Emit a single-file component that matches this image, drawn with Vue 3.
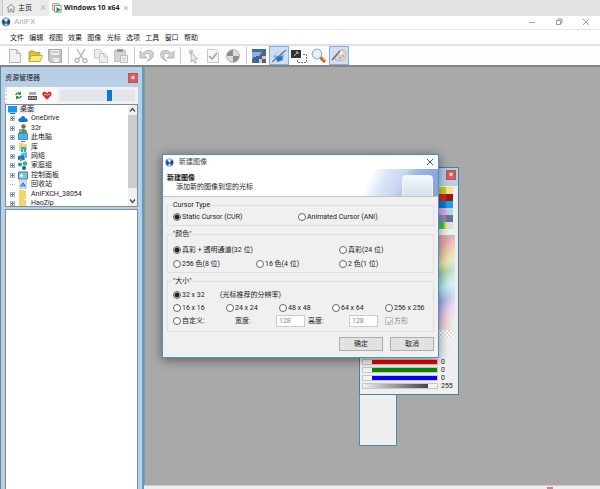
<script setup>
import { ref } from 'vue'

const menus = ['文件', '编辑', '视图', '效果', '图像', '光标', '选项', '工具', '窗口', '帮助']

const tools = [
  { id: 'new', label: '新建' }, { id: 'open', label: '打开' }, { id: 'save', label: '保存' }, null,
  { id: 'cut', label: '剪切' }, { id: 'copy', label: '复制' }, { id: 'paste', label: '粘贴' }, null,
  { id: 'undo', label: '撤消' }, { id: 'redo', label: '重做' }, null,
  { id: 'pointer', label: '热点' }, { id: 'check', label: '测试' }, { id: 'contrast', label: '对比度' }, null,
  { id: 'grid', label: '网格' }, { id: 'blend', label: '平滑', on: true }, { id: 'select', label: '选择' },
  { id: 'zoom', label: '缩放' }, { id: 'brush', label: '画笔', on: true },
]

const nodes = [
  { name: 'OneDrive', icon: 'cloud' }, { name: '32r', icon: 'user' }, { name: '此电脑', icon: 'pc' },
  { name: '库', icon: 'library' }, { name: '网络', icon: 'network' }, { name: '家庭组', icon: 'home' },
  { name: '控制面板', icon: 'panel' }, { name: '回收站', icon: 'bin', leaf: true },
  { name: 'AniFXCH_38054', icon: 'folder' }, { name: 'HaoZip', icon: 'folder' },
]

const swatches = [
  '#bdd42c', '#f8e488', '#d92820', '#a01810', '#0878d8', '#18a0f0', '#dfaade', '#c3cdec', '#8d8cb8', '#60799b',
  'linear-gradient(90deg, #4fc050 70%, #c8e020 70%)', '#dde2dc',
]
const channels = [
  { name: '红', color: '#ee0000', value: 0 },
  { name: '绿', color: '#078607', value: 0 },
  { name: '蓝', color: '#0404f4', value: 0 },
]

const kind = ref('cur')
const depth = ref('32')
const size = ref('32')
const width = ref('128')
const height = ref('128')
const volume = ref(67)
const square = ref(true)
</script>

<template>
  <div class="app">
    <header>
      <nav class="tabs">
        <a class="tab home" href="#">
          <svg width="10" height="10" viewBox="0 0 10 10"><path d="M1 5 5 1.3 9 5M2.2 4.5V9h2V6.2h1.7V9h2V4.5" fill="none" stroke="#888" stroke-width=".9" /></svg>
          <span>主页</span><i class="x">×</i>
        </a>
        <a class="tab current" href="#">
          <svg width="10" height="10" viewBox="0 0 10 10"><path d="M2.5 7H.8V.8h6.4V2M2.5 2.5h6.7v6.7H2.5z" fill="none" stroke="#888" stroke-width=".9" /><path d="M4.5 4 9 6.8 4.5 9.6z" fill="#16a02c" /></svg>
          <span>Windows 10 x64</span><i class="x">×</i>
        </a>
      </nav>
      <div class="titlebar">
        <svg class="logo" width="10" height="10" viewBox="0 0 10 10"><circle cx="5" cy="5" r="4.4" fill="#4775b5" /><path d="M1 3.2 4 5 3 7zM9 2.5 6 5l2 2z" fill="#162c62" /><path d="M2.5 1.500h5L5 5.300zM3.300 8.500l1.700-2 2 2z" fill="#e3effb" /></svg>
        <span class="appname">AniFX</span>
        <button class="wbtn" aria-label="最小化"><svg width="8" height="8" viewBox="0 0 8 8"><path d="M1 4.500h6" stroke="#aaa" /></svg></button>
        <button class="wbtn" aria-label="还原"><svg width="8" height="8" viewBox="0 0 8 8"><path d="M1.500 2.500h4v4h-4zM3 2.500V1h4v4H5.500" fill="none" stroke="#999" /></svg></button>
        <button class="wbtn" aria-label="关闭"><svg width="8" height="8" viewBox="0 0 8 8"><path d="m1 1 6 6M7 1 1 7" stroke="#999" stroke-width=".9" /></svg></button>
      </div>
      <nav class="menubar"><div class="menus"><a v-for="m in menus" :key="m" href="#">{{ m }}</a></div></nav>
      <div class="toolbar">
        <template v-for="(t, i) in tools" :key="i">
          <span v-if="!t" class="sep"></span>
          <button v-else class="tool" :class="{ on: t.on }" :aria-label="t.label">
            <svg width="16" height="16" viewBox="0 0 16 16">
              <g v-if="t.id === 'new'" fill="#f1f1f1" stroke="#b8b8b8"><path d="M2.500 1.500h7l4 4v9h-11z" /><path d="M9.500 1.500v4h4" fill="#ddd" /></g>
              <g v-else-if="t.id === 'open'"><path d="M2 13V4l1-1h4l1 1.500h5V7" fill="#d9c33a" stroke="#a39128" stroke-width=".7" /><path d="M2 13 4.500 7.500h11L13 13.500H2z" fill="#f9ed75" stroke="#b19c2c" stroke-width=".8" /></g>
              <g v-else-if="t.id === 'save'"><path d="M1.500 1.500h13v13h-11l-2-2z" fill="#c4c4c4" stroke="#aaa" /><path d="M4 2h8v5H4zM5 10h7v4H5z" fill="#eee" /><path d="M5 4h6M6 11v3" stroke="#aaa" /></g>
              <g v-else-if="t.id === 'cut'" fill="none" stroke="#b9b9b9" stroke-width="1.400"><path d="m4 1 6 10M12 1 6 11" /><circle cx="4" cy="12.500" r="2" /><circle cx="12" cy="12.500" r="2" /></g>
              <g v-else-if="t.id === 'copy'" fill="#eee" stroke="#c5c5c5"><path d="M1.500 1.500h5l2.500 2.500v6H1.500z" /><path d="M6.500 5.500h5l3 3v6h-8z" /><path d="M11 5.500V9h3.500" /></g>
              <g v-else-if="t.id === 'paste'"><path d="M1.500 2.500h11v11h-11z" fill="#d4d4d4" stroke="#c2c2c2" /><path d="M4 1h6v3H4z" fill="#999" /><path d="M7.500 7.500h7v7h-7z" fill="#f2f2f2" stroke="#bbb" /><path d="M9 10h4M9 12h4" stroke="#c5c5c5" /></g>
              <path v-else-if="t.id === 'undo'" d="M1 3v7h7L5.500 7.500C8 4.500 11.500 5 11 8.500c-.3 2-1.500 3.500-3 4.500 4-1 6.500-3.500 6.500-6.500C14.500 2 8 .5 3.500 5.500z" fill="#d1d1d1" stroke="#a8a8a8" stroke-width=".8" />
              <path v-else-if="t.id === 'redo'" d="M15 3v7H8l2.500-2.500C8 4.500 4.500 5 5 8.500c.3 2 1.500 3.500 3 4.500-4-1-6.500-3.500-6.500-6.500C1.500 2 8 .5 12.500 5.500z" fill="#d1d1d1" stroke="#a8a8a8" stroke-width=".8" />
              <g v-else-if="t.id === 'pointer'"><path d="M6 4v10l2-2 2 3.500 1.500-1-2-3.500H13z" fill="#e8e8e8" stroke="#aaa" stroke-width=".8" /><path d="M6 1v6M3 4h6M4 2l4 4M8 2 4 6" stroke="#b5b5b5" stroke-width=".8" /></g>
              <g v-else-if="t.id === 'check'"><path d="M2.500 1.500h8l3 3v10h-11z" fill="#f4f4f4" stroke="#c8c8c8" /><path d="m4 8 3 3 5-6" fill="none" stroke="#9f9f9f" stroke-width="1.500" /></g>
              <g v-else-if="t.id === 'contrast'"><circle cx="8" cy="8" r="6.300" fill="#8d8d8d" stroke="#aaa" /><path d="M8 8V2a6 6 0 0 1 6 6zM8 8v6a6 6 0 0 1-6-6z" fill="#dcdcdc" /></g>
              <g v-else-if="t.id === 'grid'"><path d="M1 1h14v14H1z" fill="#8fb0dc" /><path d="M1 1h14v3H1z" fill="#3f6db0" /><path d="M11 4h4v11H1v-4h4V8h3z" fill="#59626e" /><path d="M2 9h3v3H2zM5 8h3v3H5zM5 12h3v3H5z" fill="#2f64ae" /><path d="M8 11h3v4H8zM11 8h4v3h-4z" fill="#c7ccd1" /></g>
              <g v-else-if="t.id === 'blend'"><path d="M2 9q2-6 9-5l2 3q0 6-6 6z" fill="#8db7ea" /><path d="m5 9 6-1 1 4-6 2z" fill="#2374d6" /><path d="m3 7 5-3 5 1-5 3z" fill="#d3e5f8" /><path d="M1 14 15 2" stroke="#66778a" stroke-width="1.100" /></g>
              <g v-else-if="t.id === 'select'"><path d="M0 2h10v8H0z" fill="#343434" /><path d="m3 8 4-4M5 4h2v2" stroke="#bbb" fill="none" /><path d="M12 6.500h3.500v8h-9V11" fill="none" stroke="#777" stroke-dasharray="2 1" /></g>
              <g v-else-if="t.id === 'zoom'"><path d="m9 9 5 5" stroke="#cd5b2c" stroke-width="3" /><path d="m12 10 2 2" stroke="#f2b438" stroke-width="2" /><circle cx="6" cy="6" r="4.800" fill="#e2f0fb" stroke="#9bb3c8" stroke-width="1.200" /></g>
              <g v-else><path d="M9 2q6-1 6 4 0 7-7 7-4 0-4-3z" fill="#ddd9cf" stroke="#b5ae9f" stroke-width=".8" /><path d="M1 12 9 3" stroke="#70757d" stroke-width="1.600" /><circle cx="10" cy="5" r="1.200" fill="#fff" /><circle cx="12" cy="8" r="1.200" fill="#e4a952" /><circle cx="9" cy="10" r="1.200" fill="#92a6be" /></g>
            </svg>
          </button>
        </template>
      </div>
    </header>

    <main>
      <aside class="explorer">
        <div class="panel-title"><span>资源管理器</span><button class="close" aria-label="关闭">×</button></div>
        <div class="panel-tools">
          <button aria-label="刷新"><svg width="9" height="9" viewBox="0 0 9 9"><path d="M1 4Q2 .8 5.500 1.500L7 .5v3.500H4L5 3Q3 2.500 2.500 4zM8 5Q7 8.200 3.500 7.500L2 8.500V5h3L4 6q2 .5 2.500-1z" fill="#319544" /></svg></button>
          <button aria-label="重命名"><svg width="9" height="9" viewBox="0 0 9 9"><path d="M1 1h7v3H1z" fill="#aaa" /><path d="M0 5h9v4H0z" fill="#555" /><path d="M1 7h1.500M3.500 7h2M6.500 7H8" stroke="#ddd" stroke-width="1.300" /></svg></button>
          <button aria-label="收藏"><svg width="10" height="9" viewBox="0 0 10 9"><path d="M5 8.800.5 4Q0 .5 3 .5l2 1.700L7 .5q3 0 2.500 3.500z" fill="#d72d2b" /><path d="m2 4 1.500-1L5 4.500 6.500 3 8 4" fill="none" stroke="#f2b2ad" /></svg></button>
          <label class="track"><input v-model="volume" type="range" min="0" max="100" aria-label="预览大小"></label>
        </div>
        <div class="treebox">
          <ul class="tree">
            <li class="root"><svg width="9" height="8" viewBox="0 0 9 8"><path d="M0 0h9v6.500H0z" fill="#149bf0" /><path d="M2 7.500h5" stroke="#1173bb" /></svg><span>桌面</span></li>
            <li v-for="n in nodes" :key="n.name">
              <i class="plus" :class="{ leaf: n.leaf }"></i>
              <svg width="10" height="9" viewBox="0 0 10 9">
                <path v-if="n.icon === 'cloud'" d="M2 8Q-.5 7 .7 5 1.500 4 2.800 4 4 1 6.300 2.500 7 3 7.200 4 10 4.500 9.800 6.500 9.500 8 8 8z" fill="#0c78d6" />
                <g v-else-if="n.icon === 'user'"><path d="M1 9q0-4 4-4t4 4z" fill="#55915a" /><circle cx="5.500" cy="2.500" r="2.200" fill="#806447" /><path d="M1 5h3v3H1z" fill="#8bb796" /></g>
                <g v-else-if="n.icon === 'pc'"><path d="M.5.500h9v6h-9z" fill="#3abcf4" stroke="#40718d" stroke-width=".8" /><path d="M3 8.500h4" stroke="#678" /></g>
                <g v-else-if="n.icon === 'library'"><path d="M1 0h4l1 1h3v7H1z" fill="#f3d76c" /><path d="M3 4h5v5H6V6H5v3H3z" fill="#36a6df" /></g>
                <g v-else-if="n.icon === 'network'"><path d="m3 1 6-1v6L3 7z" fill="#61bdec" /><path d="m0 4 6-1v4L0 8z" fill="#1680c0" /><path d="M2 8.500 7 7" stroke="#556" /></g>
                <g v-else-if="n.icon === 'home'"><circle cx="2" cy="3.500" r="2" fill="#2b8bd1" /><circle cx="7" cy="2.500" r="2.300" fill="#3fb36a" /><circle cx="6" cy="7" r="2" fill="#1b5eb5" /></g>
                <g v-else-if="n.icon === 'panel'"><path d="M.5 1h9v7h-9z" fill="#7fc8ef" stroke="#367eaf" /><circle cx="3.500" cy="4.500" r="1.500" fill="#f5f5f5" /><path d="M6 3h2.500M6 5h2.500" stroke="#e99f37" /></g>
                <g v-else-if="n.icon === 'bin'"><path d="M1.500 0h7L8 9H2z" fill="#d7e1e9" stroke="#abb9c5" stroke-width=".7" /><path d="M3 6 5 3l2 3z" fill="none" stroke="#2979c2" stroke-width="1.200" /></g>
                <path v-else d="M1 0h5l1 1h1v8H1z" fill="#f1d66d" />
              </svg>
              <span>{{ n.name }}</span>
            </li>
          </ul>
          <div class="scroll">
            <svg width="7" height="6" viewBox="0 0 7 6"><path d="m1 4.500 2.500-3L6 4.500" fill="none" stroke="#444" stroke-width="1.200" /></svg>
            <i class="thumb"></i>
            <svg width="7" height="6" viewBox="0 0 7 6"><path d="m1 1.500 2.500 3 2.500-3" fill="none" stroke="#444" stroke-width="1.200" /></svg>
          </div>
        </div>
        <div class="files"></div>
      </aside>

      <section class="desk">
        <div class="workspace">
          <div class="window preview"></div>

          <div class="window palette">
            <div class="panel-title"><span></span><button class="close" aria-label="关闭">×</button></div>
            <div class="swatches"><i v-for="c in swatches" :key="c" :style="{ background: c }"></i></div>
            <div class="spectrum"></div>
            <div class="checker"></div>
            <div class="channels">
              <div v-for="c in channels" :key="c.name" class="channel">
                <span class="bar"><i class="knob"></i><i class="fill" :style="{ background: c.color }"></i></span><span class="val">{{ c.value }}</span>
              </div>
              <div class="channel"><span class="bar"><i class="fill alpha"></i><i class="knob"></i></span><span class="val">255</span></div>
            </div>
          </div>

          <form class="window dialog" @submit.prevent>
            <div class="dialog-title">
              <svg width="9" height="9" viewBox="0 0 10 10"><circle cx="5" cy="5" r="4.500" fill="#4775b5" /><path d="M1 3.200 4 5 3 7zM9 2.500 6 5l2 2z" fill="#162c62" /><path d="M2.500 1.500h5L5 5.300zM3.300 8.500l1.700-2 2 2z" fill="#e3effb" /></svg>
              <span>新建图像</span>
              <button type="button" class="dclose" aria-label="关闭"><svg width="8" height="8" viewBox="0 0 8 8"><path d="m1 1 6 6M7 1 1 7" stroke="#444" stroke-width=".9" /></svg></button>
            </div>
            <div class="banner">
              <div><h1>新建图像</h1><p>添加新的图像到您的光标</p></div>
              <span class="art"><i></i></span>
            </div>
            <div class="content">
              <fieldset class="g1">
                <legend>Cursor Type</legend>
                <div class="row two">
                  <label><input v-model="kind" type="radio" name="kind" value="cur">Static Cursor (CUR)</label>
                  <label><input v-model="kind" type="radio" name="kind" value="ani">Animated Cursor (ANI)</label>
                </div>
              </fieldset>
              <fieldset class="g2">
                <legend>"颜色"</legend>
                <div class="row three">
                  <label class="wide"><input v-model="depth" type="radio" name="depth" value="32">真彩 + 透明通道(32 位)</label>
                  <label><input v-model="depth" type="radio" name="depth" value="24">真彩(24 位)</label>
                  <label><input v-model="depth" type="radio" name="depth" value="8">256 色(8 位)</label>
                  <label><input v-model="depth" type="radio" name="depth" value="4">16 色(4 位)</label>
                  <label><input v-model="depth" type="radio" name="depth" value="1">2 色(1 位)</label>
                </div>
              </fieldset>
              <fieldset class="g3">
                <legend>"大小"</legend>
                <div class="row five">
                  <label><input v-model="size" type="radio" name="size" value="32">32 x 32</label>
                  <span class="hint">(光标推荐的分辨率)</span>
                  <label><input v-model="size" type="radio" name="size" value="16">16 x 16</label>
                  <label><input v-model="size" type="radio" name="size" value="24">24 x 24</label>
                  <label><input v-model="size" type="radio" name="size" value="48">48 x 48</label>
                  <label><input v-model="size" type="radio" name="size" value="64">64 x 64</label>
                  <label><input v-model="size" type="radio" name="size" value="256">256 x 256</label>
                </div>
                <div class="row custom">
                  <label><input v-model="size" type="radio" name="size" value="custom">自定义:</label>
                  <label for="w">宽度:</label><input id="w" v-model="width" class="num" type="text" disabled>
                  <label for="h">高度:</label><input id="h" v-model="height" class="num" type="text" disabled>
                  <label class="off"><input v-model="square" type="checkbox" disabled>方形</label>
                </div>
              </fieldset>
              <div class="actions"><button type="submit">确定</button><button type="button">取消</button></div>
            </div>
          </form>
        </div>
        <footer class="status"><i></i></footer>
      </section>
    </main>
  </div>
</template>

<style>
body { margin: 0; }
</style>

<style scoped>
* { box-sizing: border-box; }
.app { display: flex; flex-direction: column; height: 100vh; overflow: hidden; background: #fff; color: #222; font: 7px/10px Roboto, "Noto Sans CJK SC", sans-serif; }
button, input { font: inherit; color: inherit; margin: 0; padding: 0; }
button { display: flex; align-items: center; justify-content: center; background: none; border: 0; }
a { color: inherit; text-decoration: none; }
i { font-style: normal; }
svg { display: block; flex: none; }

.tabs { display: flex; height: 16px; padding-left: 2px; background: #e1e2e4; }
.tab { display: flex; align-items: center; gap: 2px; padding: 0 3px; }
.home { width: 47px; background: #eaebed; border-left: 1px solid #c8c9ca; }
.current { width: 83px; background: #fff; font-weight: 700; font-family: "Open Sans", sans-serif; }
.x { margin-left: auto; color: #bbb; font-size: 11px; font-weight: 400; }
.titlebar { display: flex; align-items: center; height: 14px; padding: 0 10px 2px 1px; border-bottom: 1px solid #e8e8e8; }
.appname { flex: 1; margin-left: 3px; color: #aaa; font-size: 8px; }
.wbtn { width: 8px; margin-left: 19px; }
.menubar { height: 16px; padding: 3px 10px; border-bottom: 2px solid #dfe3e5; }
.menus { display: flex; justify-content: space-between; max-width: 188px; }
.toolbar { display: flex; height: 21px; padding-left: 5px; border-bottom: 2px solid #858585; background: #fdfdfd; }
.tool { width: 20px; height: 19px; border: 1px solid transparent; }
.tool.on { background: #d0ddf3; border-color: #8caae4; }
.sep { width: 6px; background: linear-gradient(#ccc, #ccc) center / 1px 17px no-repeat; }

main { display: flex; flex: 1; min-height: 0; }
.explorer { display: flex; flex-direction: column; width: 144px; padding: 0 4px; background: #b8cfe8; border: 1px solid #61879c; border-width: 0 2px 0 1px; border-right-color: #5f9eb5; }
.panel-title { display: flex; align-items: center; justify-content: space-between; height: 20px; padding: 2px 0 0; }
.close { width: 10px; height: 10px; background: #d75b5f; border: 1px solid #bf5055; color: #fff; font-weight: 700; }
.panel-tools { display: flex; align-items: center; gap: 5px; height: 17px; padding-left: 7px; background: #fbfbfb; border-left: 2px dotted #ddd; }
.track { display: flex; align-items: center; flex: 1; height: 17px; padding: 0 3px; background: #f0f1f2; }
.track input { appearance: none; width: 100%; height: 11px; background: #e3e6e8; }
.track input::-webkit-slider-thumb { appearance: none; width: 5px; height: 11px; background: #0a78d7; }
.treebox { display: flex; height: 103px; background: #fff; border: 1px solid #7f8c96; overflow: hidden; }
.tree { display: flex; flex-direction: column; justify-content: space-between; flex: 1; margin: 0 0 -2px; padding: 0 0 0 2px; list-style: none; }
.tree li { display: flex; align-items: center; gap: 3px; height: 9px; padding-left: 2px; line-height: 9px; white-space: nowrap; }
.tree .root { gap: 2px; padding-left: 0; }
.root span { padding: 0 1px; background: #efefef; }
.plus { width: 5px; height: 5px; border: 1px solid #aab3be; background: linear-gradient(#678, #678) center / 3px 1px no-repeat, linear-gradient(#678, #678) center / 1px 3px no-repeat; }
.plus.leaf { height: 1px; background: none; border-width: 1px 0 0; border-top-style: dotted; }
.scroll { display: flex; flex-direction: column; align-items: center; justify-content: space-between; width: 9px; padding: 2px 0; background: #f0f0f0; }
.thumb { flex: 1; width: 9px; margin: 2px 0 10px; background: #cdcdcd; }
.files { flex: 1; margin-top: 2px; background: #fff; border: 1px solid #7f8c96; border-bottom: 0; }

.desk { display: flex; flex-direction: column; flex: 1; min-width: 0; }
.workspace { position: relative; flex: 1; background: #a9a9a9; border-left: 1px solid #8d989e; }
.status { height: 4px; padding-left: 403px; background: #efefef; border-top: 1px solid #ccc; }
.status i { display: block; width: 6px; height: 2px; margin-top: 1px; background: #dd7c80; }

.window { position: absolute; }
.preview { left: 214px; top: 326px; width: 38px; height: 53px; background: #efefef; border: 1px solid #4f90a8; border-top-color: #777; }
.palette { left: 214px; top: 100px; width: 100px; height: 228px; padding: 0 2px; background: #efefef; border: 1px solid #4c8099; }
.palette .panel-title { height: 18px; margin: 0 -2px; padding: 0 2px; background: #b8cfe8; }
.palette .panel-title .close { margin-top: -4px; }
.swatches { display: grid; grid-template-columns: 7px 7px; grid-auto-rows: 7px; justify-content: end; margin: 1px 3px 6px; }
.spectrum { height: 95px; margin-right: 1px; border-top: 1px solid #bbb; background: linear-gradient(100deg, transparent 78%, #f4f4f4dd 98%), linear-gradient(160deg, #e2a7a5 28%, #eee4a8 44%, #a5d1a0 52%, #b0ecef 63%, #8f9fde 74%, #dda4dc 84%, #e3b3ad 94%); }
.checker { height: 7px; margin-right: 1px; background: repeating-conic-gradient(#ddd 0 25%, #fff 0 50%) 0 0 / 4px 4px; }
.channels { margin-top: 21px; }
.channel { display: flex; align-items: center; gap: 3px; height: 8px; line-height: 8px; }
.bar { display: flex; width: 76px; height: 6px; border: 1px solid #c7c7c7; }
.knob { width: 9px; background: #f2f2f2; }
.fill { flex: 1; }
.alpha { background: linear-gradient(90deg, #eee, #aaa 40%, #444); }

.dialog { left: 17px; top: 87px; width: 277px; height: 204px; background: #f0f0f0; border: 1px solid #4b8fd4; box-shadow: 0 2px 10px #0007; }
.dialog-title { display: flex; align-items: center; gap: 5px; height: 14px; padding: 0 4px 0 2px; background: #fff; color: #444; }
.dclose { width: 9px; margin-left: auto; }
.banner { display: flex; justify-content: space-between; height: 28px; padding-left: 4px; background: #fff; border-bottom: 1px solid #c4c4c4; }
.banner h1 { margin: 4px 0 0; font-size: 7px; line-height: 10px; }
.banner p { margin: 0 0 0 9px; line-height: 9px; }
.art { display: flex; justify-content: flex-end; width: 75px; padding: 6px 5px 0; background: linear-gradient(115deg, #fff 12%, #dce5f6 30%, #c8d5f0 50%, #99b4df 65%, #7fa4d5); }
.art i { width: 31px; border: 1px solid #f1f5fc; border-bottom: 0; border-radius: 4px 4px 0 0; background: linear-gradient(#f4f7fb, #d6e0ee); }
.content { padding: 4px 4px 0; }
fieldset { min-width: 0; margin: 0; padding: 0 5px; border: 1px solid #dfdfdf; }
legend { height: 8px; padding: 0; line-height: 8px; }
.g1 { padding-top: 3px; padding-bottom: 3px; }
.g2 { margin-top: 4px; padding-top: 5px; padding-bottom: 1px; }
.g3 { margin-top: 4px; padding-top: 3px; padding-bottom: 3px; }
.row { display: grid; align-items: center; white-space: nowrap; }
.two { grid-template-columns: 125px 1fr; }
.three { grid-template-columns: 83px 83px 1fr; grid-auto-rows: 14px; }
.wide { grid-column: span 2; }
.five { grid-template-columns: repeat(5, 53px); grid-auto-rows: 13px; }
.hint { grid-column: span 4; margin-left: -6px; }
.custom { grid-template-columns: 62px 41px 32px 41px 36px 1fr; height: 14px; }
label { display: flex; align-items: center; gap: 1px; }
.row input[type="radio"] { appearance: none; width: 8px; height: 8px; border: 1px solid #666; border-radius: 50%; background: #fff; }
.row input[type="radio"]:checked { background: radial-gradient(#222 0 2px, #fff 3px); }
.row input[type="checkbox"] { appearance: none; display: grid; place-items: center; width: 8px; height: 8px; border: 1px solid #c5c5c5; }
.row input[type="checkbox"]:checked::before { content: ""; width: 4px; height: 2px; border: solid #aaa; border-width: 0 0 1px 1px; transform: rotate(-45deg); }
.num { width: 29px; height: 12px; padding: 0 2px; background: #fff; border: 1px solid #ccc; color: #888; }
.off { color: #888; }
.actions { display: flex; justify-content: flex-end; gap: 7px; margin-top: 5px; }
.actions button { width: 44px; height: 14px; background: #e2e2e2; border: 1px solid #aeaeae; }
</style>
